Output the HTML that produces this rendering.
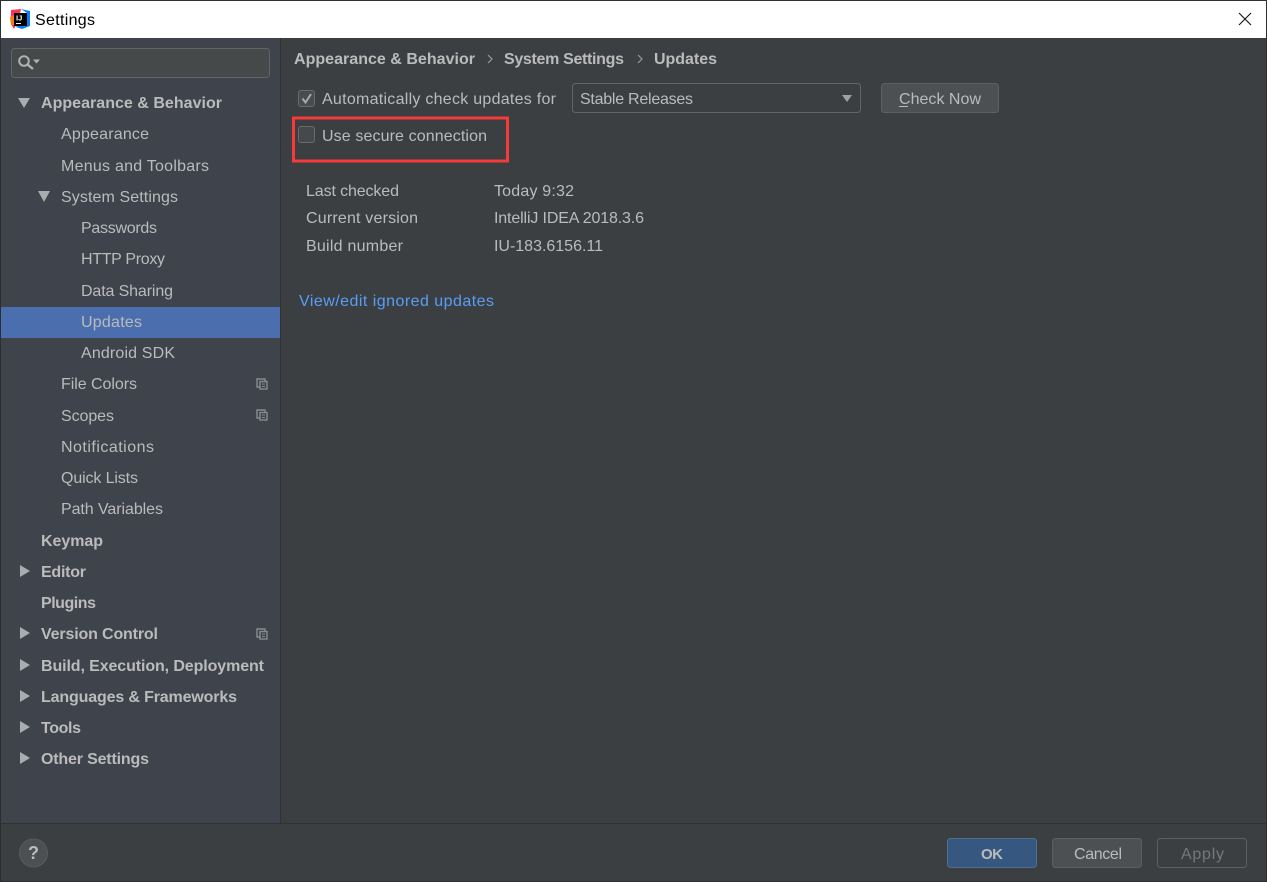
<!DOCTYPE html>
<html><head><meta charset="utf-8"><title>Settings</title>
<style>
html,body{margin:0;padding:0;width:1267px;height:882px;overflow:hidden;background:#3c3f41}
svg{display:block}
text{font-family:"Liberation Sans",sans-serif;font-size:16px;fill:#bbbbbb}
.b{font-weight:bold}
</style></head><body>
<svg width="1267" height="882" viewBox="0 0 1267 882" xmlns="http://www.w3.org/2000/svg">
<rect width="1267" height="882" fill="#3c3f41"/>
<rect x="1" y="1" width="1265" height="37" fill="#fff"/>
<rect x="0" y="0" width="1267" height="1" fill="#2e3133"/>
<rect x="0" y="0" width="1" height="882" fill="#2b2d2f"/>
<rect x="1266" y="0" width="1" height="882" fill="#2b2d2f"/>
<rect x="0" y="881" width="1267" height="1" fill="#2b2d2f"/>
<!-- logo -->
<path d="M11 10L21 9L19 20L14 29L11 24Z" fill="#fe315d"/>
<path d="M10 17L14 15L14 25L11 25Z" fill="#f97a12"/>
<path d="M21 9L30 11L30 26L22 29L16 27L27 13Z" fill="#087cfa"/>
<rect x="14" y="13" width="13" height="13" fill="#000"/>
<text x="16" y="20.500" style="font-size:7.500px;font-weight:bold;fill:#fff">IJ</text>
<rect x="16" y="23" width="5" height="1" fill="#fff"/>
<text x="35" y="25" textLength="60" lengthAdjust="spacing" style="fill:#000">Settings</text>
<path d="M1239 13L1251 25M1251 13L1239 25" stroke="#111" stroke-width="1.100" fill="none"/>
<!-- sidebar -->
<rect x="1" y="38" width="279" height="785" fill="#3e434c"/>
<rect x="280" y="38" width="1" height="785" fill="#323232"/>
<rect x="1" y="307" width="279" height="31" fill="#4b6eaf"/>
<rect x="11.500" y="48.500" width="258" height="29" rx="3" fill="#45494a" stroke="#646464"/>
<circle cx="24" cy="61" r="4.800" fill="none" stroke="#afb1b3" stroke-width="2"/>
<path d="M27.500 64.500L33 69" stroke="#afb1b3" stroke-width="2.400"/>
<path d="M33 59.500H40L36.500 63.500Z" fill="#afb1b3"/>
<g fill="#a8adb0">
<path d="M18 98H30L24 108Z"/>
<path d="M38 191H50L44 202Z"/>
<path d="M20 565L30 571L20 577Z"/>
<path d="M20 627L30 633L20 639Z"/>
<path d="M20 659L30 665L20 671Z"/>
<path d="M20 690L30 696L20 702Z"/>
<path d="M20 721L30 727L20 733Z"/>
<path d="M20 752L30 758L20 764Z"/>
</g>
<text class="b" x="41" y="108" textLength="181" lengthAdjust="spacing">Appearance &amp; Behavior</text>
<text x="61" y="139" textLength="88" lengthAdjust="spacing">Appearance</text>
<text x="61" y="171" textLength="148" lengthAdjust="spacing">Menus and Toolbars</text>
<text x="61" y="202" textLength="117" lengthAdjust="spacing">System Settings</text>
<text x="81" y="233" textLength="76" lengthAdjust="spacing">Passwords</text>
<text x="81" y="264" textLength="84" lengthAdjust="spacing">HTTP Proxy</text>
<text x="81" y="296" textLength="92" lengthAdjust="spacing">Data Sharing</text>
<text x="81" y="327" textLength="61" lengthAdjust="spacing">Updates</text>
<text x="81" y="358" textLength="94" lengthAdjust="spacing">Android SDK</text>
<text x="61" y="389" textLength="76" lengthAdjust="spacing">File Colors</text>
<text x="61" y="421" textLength="53" lengthAdjust="spacing">Scopes</text>
<text x="61" y="452" textLength="93" lengthAdjust="spacing">Notifications</text>
<text x="61" y="483" textLength="77" lengthAdjust="spacing">Quick Lists</text>
<text x="61" y="514" textLength="102" lengthAdjust="spacing">Path Variables</text>
<text class="b" x="41" y="546" textLength="62" lengthAdjust="spacing">Keymap</text>
<text class="b" x="41" y="577" textLength="45" lengthAdjust="spacing">Editor</text>
<text class="b" x="41" y="608" textLength="55" lengthAdjust="spacing">Plugins</text>
<text class="b" x="41" y="639" textLength="117" lengthAdjust="spacing">Version Control</text>
<text class="b" x="41" y="671" textLength="223" lengthAdjust="spacing">Build, Execution, Deployment</text>
<text class="b" x="41" y="702" textLength="196" lengthAdjust="spacing">Languages &amp; Frameworks</text>
<text class="b" x="41" y="733" textLength="40" lengthAdjust="spacing">Tools</text>
<text class="b" x="41" y="764" textLength="108" lengthAdjust="spacing">Other Settings</text>
<defs><g id="cp" fill="none" stroke="#858c90" stroke-width="1.400">
<path d="M260 387H257V379H265V381"/>
<rect x="260" y="381.500" width="7" height="7.500" fill="#3e434c"/>
<path d="M262 384H265M262 386.500H265" stroke-width="1"/>
</g></defs>
<use href="#cp"/>
<use href="#cp" y="31"/>
<use href="#cp" y="250"/>
<!-- content -->
<text class="b" x="294" y="64" textLength="181" lengthAdjust="spacing">Appearance &amp; Behavior</text>
<path d="M488 55L492 59L488 63" fill="none" stroke="#9a9a9a" stroke-width="1.200"/>
<text class="b" x="504" y="64" textLength="120" lengthAdjust="spacing">System Settings</text>
<path d="M638 55L642 59L638 63" fill="none" stroke="#9a9a9a" stroke-width="1.200"/>
<text class="b" x="654" y="64" textLength="63" lengthAdjust="spacing">Updates</text>
<rect x="298.500" y="90.500" width="16" height="16" rx="2.500" fill="#484c4e" stroke="#6b6b6b"/>
<path d="M302.500 98.500L305.500 102.500L311 94" fill="none" stroke="#a9a9a9" stroke-width="2"/>
<text x="322" y="104" textLength="234" lengthAdjust="spacing">Automatically check updates for</text>
<rect x="572.500" y="83.500" width="288" height="29" rx="3" fill="#3c3f41" stroke="#646464"/>
<text x="580" y="104" textLength="113" lengthAdjust="spacing">Stable Releases</text>
<path d="M842 95H852L847 102Z" fill="#a0a0a0"/>
<rect x="881.500" y="83.500" width="117" height="29" rx="3" fill="#4c5052" stroke="#5e6060"/>
<text x="899" y="104" textLength="82" lengthAdjust="spacing">Check Now</text>
<rect x="899" y="106" width="9" height="1" fill="#bbb"/>
<rect x="298.500" y="126.500" width="16" height="16" rx="2.500" fill="#45494b" stroke="#6b6b6b"/>
<text x="322" y="141" textLength="165" lengthAdjust="spacing">Use secure connection</text>
<rect x="293.500" y="118" width="214" height="43" fill="none" stroke="#f63a3a" stroke-width="3"/>
<text x="306" y="196" textLength="93" lengthAdjust="spacing">Last checked</text>
<text x="306" y="223" textLength="112" lengthAdjust="spacing">Current version</text>
<text x="306" y="251" textLength="97" lengthAdjust="spacing">Build number</text>
<text x="494" y="196" textLength="80" lengthAdjust="spacing">Today 9:32</text>
<text x="494" y="223" textLength="150" lengthAdjust="spacing">IntelliJ IDEA 2018.3.6</text>
<text x="494" y="251" textLength="109" lengthAdjust="spacing">IU-183.6156.11</text>
<text x="299" y="306" textLength="195" lengthAdjust="spacing" style="fill:#589df6">View/edit ignored updates</text>
<!-- footer -->
<rect x="1" y="823" width="1265" height="1" fill="#323232"/>
<circle cx="33.500" cy="853" r="14" fill="#4c5052" stroke="#585b5c"/>
<text x="33.500" y="859" text-anchor="middle" style="font-size:18px;font-weight:bold;fill:#bbb">?</text>
<rect x="947.500" y="838.500" width="89" height="29" rx="3" fill="#365880" stroke="#4c708c"/>
<text class="b" x="981" y="859" textLength="22" lengthAdjust="spacing" style="font-size:15px">OK</text>
<rect x="1052.500" y="838.500" width="89" height="29" rx="3" fill="#4c5052" stroke="#5e6060"/>
<text x="1074" y="859" textLength="48" lengthAdjust="spacing">Cancel</text>
<rect x="1157.500" y="838.500" width="89" height="29" rx="3" fill="#3c3f41" stroke="#5e6060"/>
<text x="1181" y="859" textLength="43" lengthAdjust="spacing" style="fill:#777">Apply</text>
</svg>
</body></html>
